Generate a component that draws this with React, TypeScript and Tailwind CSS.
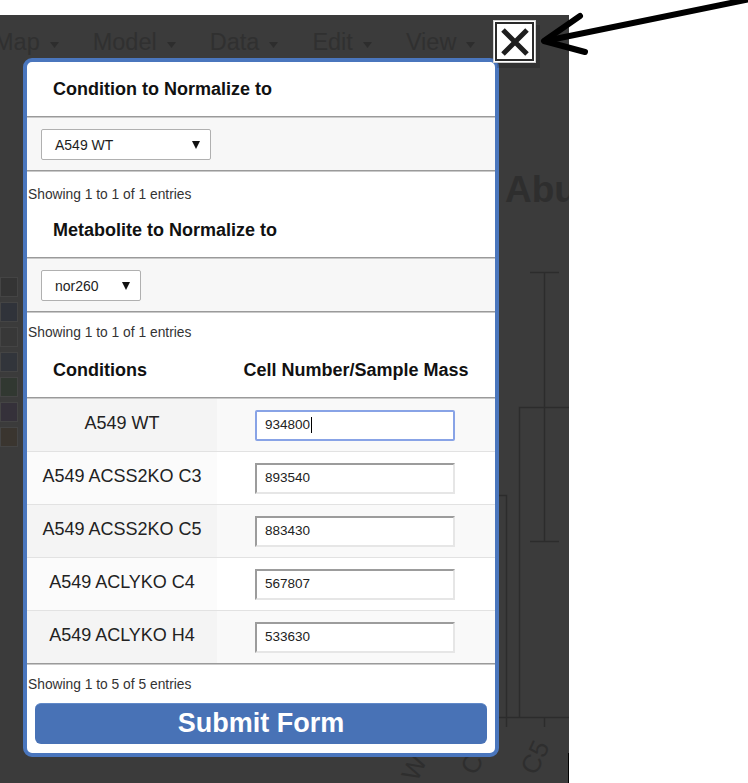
const navItems = ['Map', 'Model', 'Data', 'Edit', 'View'];

const legend = ['#343434', '#30333a', '#383838', '#32353b', '#313831', '#35313a', '#3a352f'];

const rows = [
  { name: 'A549 WT', value: '934800', focused: true },
  { name: 'A549 ACSS2KO C3', value: '893540' },
  { name: 'A549 ACSS2KO C5', value: '883430' },
  { name: 'A549 ACLYKO C4', value: '567807' },
  { name: 'A549 ACLYKO H4', value: '533630' },
];

function Caret() {
  return (
    <svg width="9" height="6" viewBox="0 0 9 6">
      <path d="M0 0h9L4.5 6z" fill="#2d2d2d" />
    </svg>
  );
}

function SelectBox({ label, width }: { label: string; width: string }) {
  return (
    <div
      className={`flex h-[31px] ${width} items-center justify-between rounded-[2px] border border-[#b0b0b0] bg-white pl-[13px] pr-[10px] pt-[2px] text-[14px] text-[#1d1d1d]`}
    >
      <span>{label}</span>
      <svg width="8" height="8" viewBox="0 0 8 8">
        <path d="M0 0h8L4 8z" fill="#111" />
      </svg>
    </div>
  );
}

function Info({ text, pad }: { text: string; pad: string }) {
  return <div className={`h-[31px] ${pad} pl-[1px] text-[13.8px] leading-4 text-[#333]`}>{text}</div>;
}

function Rule() {
  return <div className="h-[2px] border-t border-b border-t-[#9a9a9a] border-b-[#c9c9c9]" />;
}

export default function App() {
  return (
    <div className="relative h-[783px] w-[748px] overflow-hidden bg-white font-['Liberation_Sans',Arial,sans-serif]">
      <div className="h-[15px]" />
      <div className="flex">
        {/* dimmed page behind the modal */}
        <div className="relative h-[768px] w-[569px] overflow-hidden bg-[#3b3b3b]">
          <nav className="ml-[-6px] flex h-[56px] items-center text-[23.5px] text-[#303030]">
            {navItems.map((item) => (
              <div key={item} className="mr-[34px] flex items-center gap-[10px]">
                <span>{item}</span>
                <span className="mt-[3px]">
                  <Caret />
                </span>
              </div>
            ))}
          </nav>

          <div className="mt-[100px] ml-[505px] text-[37px] font-bold leading-none text-[#2e2e2e]">Abu</div>

          {/* legend swatches */}
          <div className="mt-[69px] flex flex-col gap-[5px]">
            {legend.map((c) => (
              <div key={c} className="h-[20px] w-[18px] border border-[#444]" style={{ background: c }} />
            ))}
          </div>

          {/* chart behind */}
          <svg className="absolute left-0 top-0" width="569" height="768" viewBox="0 0 569 768">
            <g stroke="#2c2c2c" strokeWidth="1.5" fill="none">
              <path d="M530 257.5h29M544.5 257.5v269M530 526.5h29" />
              <path d="M519.5 702V392.5H600" />
              <path d="M470 480.5h36.5V702" />
              <path d="M300 702.5h269M544.5 702v10M506.5 702v10" />
            </g>
            <g fill="#2e2e2e" fontSize="26" fontFamily="Liberation Sans, Arial, sans-serif">
              <text x="550" y="731" textAnchor="end" transform="rotate(-65 550 731)">
                C5
              </text>
              <text x="490" y="731" textAnchor="end" transform="rotate(-65 490 731)">
                C3
              </text>
              <text x="434" y="731" textAnchor="end" transform="rotate(-65 434 731)">
                WT
              </text>
            </g>
          </svg>

          {/* modal */}
          <div className="absolute left-[23px] top-[43px] w-[476px] rounded-[9px] border-4 border-[#4a76bd] bg-white">
            <div className="overflow-hidden rounded-[5px]">
              <div className="flex h-[54px] items-center pl-[26px] text-[18px] font-bold text-[#111]">
                Condition to Normalize to
              </div>
              <Rule />
              <div className="flex h-[52px] items-center bg-[#f7f7f7] pl-[14px]">
                <SelectBox label="A549 WT" width="w-[170px]" />
              </div>
              <Rule />
              <Info text="Showing 1 to 1 of 1 entries" pad="pt-[15px]" />
              <div className="flex h-[54px] items-center pl-[26px] text-[18px] font-bold text-[#111]">
                Metabolite to Normalize to
              </div>
              <Rule />
              <div className="flex h-[52px] items-center bg-[#f7f7f7] pl-[14px]">
                <SelectBox label="nor260" width="w-[100px]" />
              </div>
              <Rule />
              <Info text="Showing 1 to 1 of 1 entries" pad="pt-[12px] h-[30px]" />

              <div className="grid h-[53px] grid-cols-[190px_1fr] items-center text-[18px] font-bold text-[#111]">
                <div className="pl-[26px]">Conditions</div>
                <div className="text-center">Cell Number/Sample Mass</div>
              </div>
              <Rule />
              {rows.map((row, i) => (
                <div
                  key={row.name}
                  className={`grid h-[52px] grid-cols-[190px_1fr] text-[18px] text-[#222] ${
                    i > 0 ? 'box-content border-t border-[#e2e2e2]' : ''
                  } ${i % 2 === 0 ? 'bg-[#f9f9f9]' : 'bg-white'}`}
                >
                  <div
                    className={`flex items-center justify-center pb-[4px] ${
                      i % 2 === 0 ? 'bg-[#f4f4f4]' : 'bg-[#fbfbfb]'
                    }`}
                  >
                    {row.name}
                  </div>
                  <div className="flex items-center pl-[38px]">
                    <div
                      className={`flex h-[31px] w-[200px] items-center bg-white pl-[8px] text-[13.5px] text-[#222] ${
                        row.focused
                          ? 'rounded-[2px] border-2 border-[#88a3e6]'
                          : 'border-2 border-t-[#9c9c9c] border-l-[#9c9c9c] border-r-[#e6e6e6] border-b-[#e6e6e6]'
                      }`}
                    >
                      {row.value}
                      {row.focused && <span className="ml-[1px] h-[16px] w-[1px] bg-black" />}
                    </div>
                  </div>
                </div>
              ))}
              <Rule />
              <Info text="Showing 1 to 5 of 5 entries" pad="pt-[12px] h-[30px]" />
              <div className="px-[8px] pt-[7px] pb-[9px]">
                <button className="flex h-[41px] w-full items-center justify-center rounded-[6px] border-t border-[#6189c8] bg-[#4872b6] pb-[2px] text-[27px] font-bold text-white">
                  Submit Form
                </button>
              </div>
            </div>
          </div>

          {/* close button */}
          <div className="absolute left-[493px] top-[5px] h-[43px] w-[43px] border border-[#cfcfcf] bg-white p-[1px] shadow-[4px_5px_0_rgba(0,0,0,0.15)]">
            <div className="flex h-full w-full items-center justify-center border-2 border-[#2a2a2a] bg-white">
              <svg width="28" height="28" viewBox="0 0 28 28">
                <path d="M2 2L26 26M26 2L2 26" stroke="#1e1e1e" strokeWidth="5" />
              </svg>
            </div>
          </div>

          <div className="absolute bottom-0 left-[568px] h-[30px] w-[2px] bg-black" />
        </div>
      </div>

      {/* annotation arrow */}
      <svg className="pointer-events-none absolute left-0 top-0" width="748" height="783" viewBox="0 0 748 783">
        <g stroke="#000" strokeWidth="6" strokeLinecap="round" strokeLinejoin="round" fill="none">
          <path d="M545 41L760 -3" />
          <path d="M580 16L544 41L585 52" />
        </g>
      </svg>
    </div>
  );
}
